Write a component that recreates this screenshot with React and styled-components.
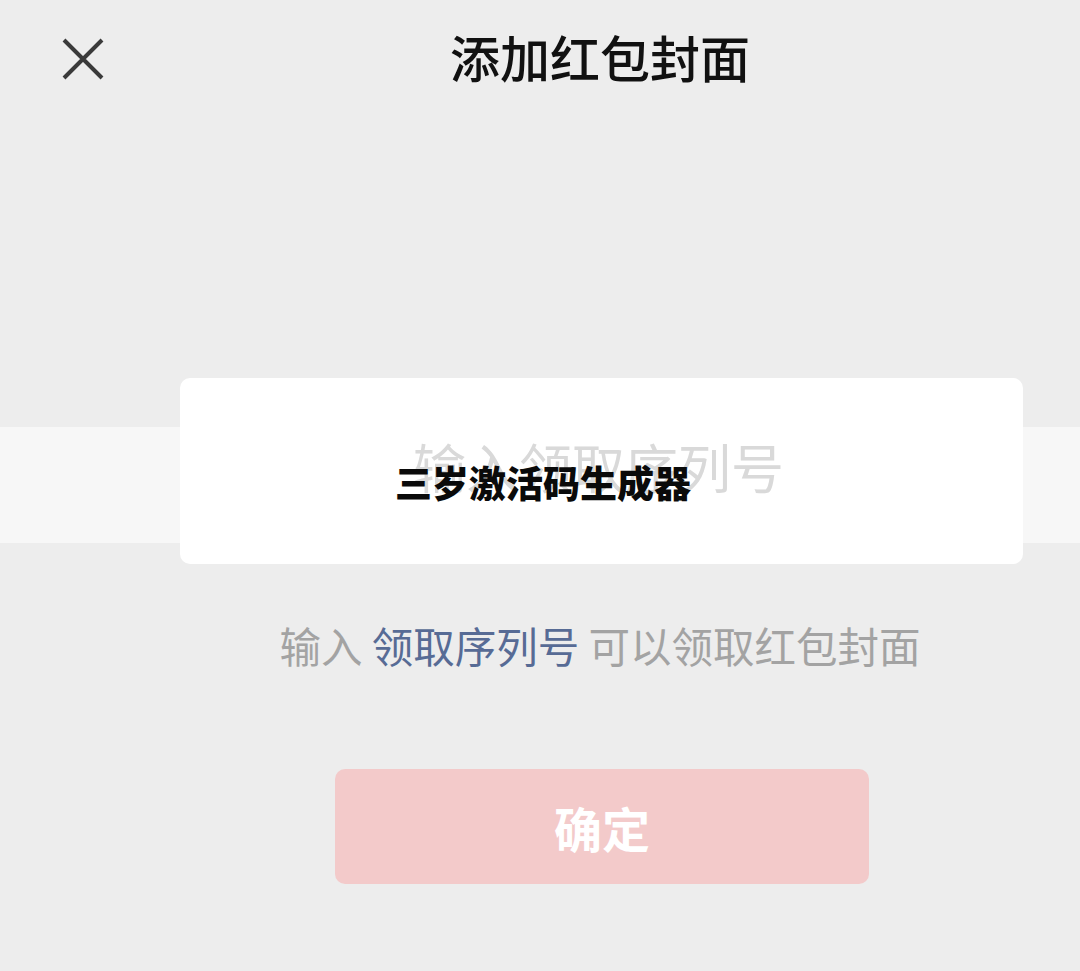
import React from 'react'
import styled, { createGlobalStyle } from 'styled-components'

const GlobalStyle = createGlobalStyle`
  html, body {
    margin: 0;
    padding: 0;
    background: #ededed;
  }
  body {
    font-family: "Noto Sans CJK SC", "Noto Sans", sans-serif;
  }
`

const Page = styled.div`
  width: 1080px;
  height: 971px;
  background: #ededed;
  display: flex;
  flex-direction: column;
  overflow: hidden;
`

const Header = styled.div`
  height: 120px;
  display: flex;
  align-items: center;
  padding-left: 60px;
  padding-bottom: 8px;
  box-sizing: border-box;
`

const CloseButton = styled.button`
  width: 46px;
  height: 46px;
  padding: 0;
  border: none;
  background: transparent;
  display: flex;
  align-items: center;
  justify-content: center;
  margin-top: 6px;
`

const Title = styled.h1`
  margin: 0 0 0 344px;
  font-size: 50px;
  line-height: 50px;
  font-weight: 500;
  color: #111;
`

const InputArea = styled.div`
  position: relative;
  margin-top: 307px;
`

const InputStrip = styled.div`
  height: 116px;
  background: #f7f7f7;
  display: flex;
  align-items: center;
  padding-left: 413px;
`

const Placeholder = styled.span`
  position: relative;
  z-index: 2;
  font-size: 53px;
  line-height: 53px;
  color: #d9d9d9;
  margin-top: -38px;
`

const Overlay = styled.div`
  position: absolute;
  left: 180px;
  top: -49px;
  width: 843px;
  height: 186px;
  background: #fff;
  border-radius: 10px;
  z-index: 1;
`

const Badge = styled.div`
  position: absolute;
  left: 395px;
  top: 37px;
  z-index: 3;
  font-size: 37px;
  line-height: 37px;
  font-weight: 900;
  color: #0a0a0a;
`

const Hint = styled.p`
  margin: 80px 0 0;
  text-align: center;
  padding-left: 120px;
  font-size: 41.5px;
  line-height: 44px;
  color: #a3a3a3;
`

const Link = styled.span`
  color: #576b95;
`

const ConfirmButton = styled.button`
  align-self: flex-start;
  margin: 102px 0 0 335px;
  width: 534px;
  height: 115px;
  border: none;
  border-radius: 10px;
  background: #f3caca;
  color: #fff;
  font-family: inherit;
  font-size: 48px;
  font-weight: 700;
`

const CloseIcon = () => (
  <svg width="44" height="42" viewBox="0 0 44 42">
    <path d="M3 2 L41 40 M41 2 L3 40" stroke="#3a3a3a" strokeWidth="4" />
  </svg>
)

const App = () => {
  return (
    <Page>
      <GlobalStyle />
      <Header>
        <CloseButton>
          <CloseIcon />
        </CloseButton>
        <Title>添加红包封面</Title>
      </Header>
      <InputArea>
        <InputStrip>
          <Placeholder>输入领取序列号</Placeholder>
        </InputStrip>
        <Overlay />
        <Badge>三岁激活码生成器</Badge>
      </InputArea>
      <Hint>
        输入 <Link>领取序列号</Link> 可以领取红包封面
      </Hint>
      <ConfirmButton>确定</ConfirmButton>
    </Page>
  )
}

export default App
